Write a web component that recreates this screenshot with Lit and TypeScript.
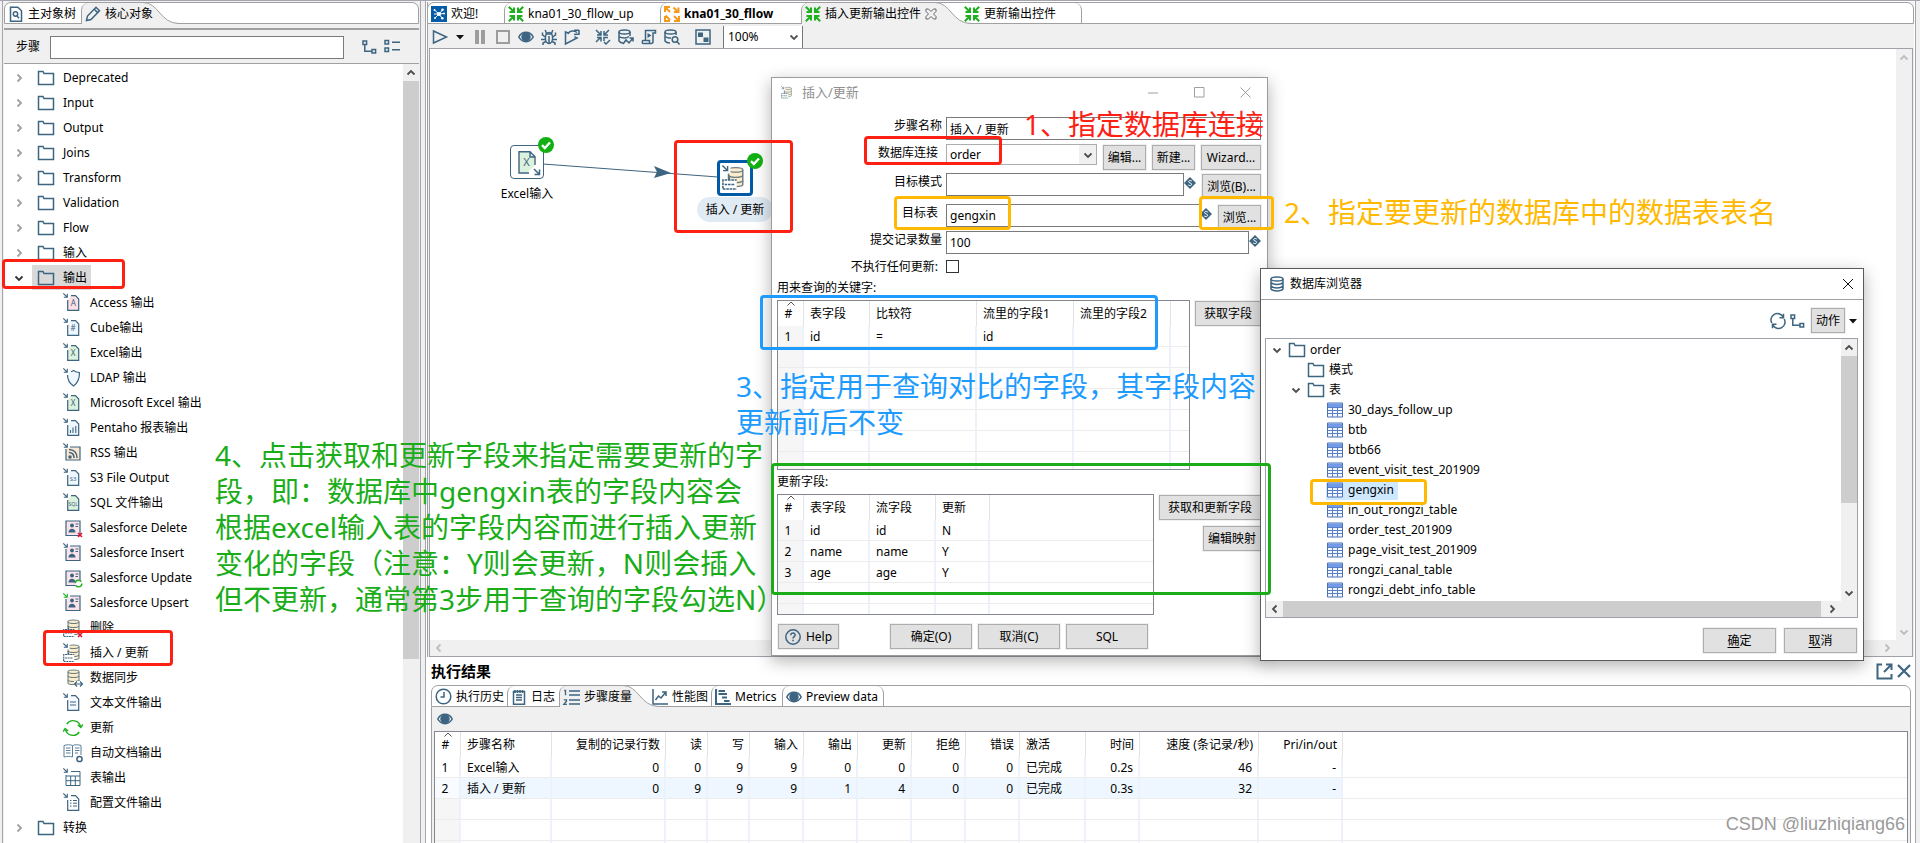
import { LitElement, html, svg, css, nothing, type TemplateResult } from "lit";
import { customElement } from "lit/decorators.js";
import { classMap } from "lit/directives/class-map.js";
import { styleMap } from "lit/directives/style-map.js";

type Glyph = TemplateResult;

const INK = "#3d6480";
const GREEN = "#1fb01f";
const RED = "#e3122b";

const icon = (size: number, body: unknown, box = size) => html`
  <svg class="icon" width=${size} height=${size} viewBox="0 0 ${box} ${box}" fill="none"
    stroke=${INK} stroke-width="1.5" aria-hidden="true">${body}</svg>`;

/* ---------- toolbar and tab glyphs ---------- */
const folder = () => icon(18, svg`<path d="M1.5 3v12.5h15V4.5H7L6 2.5H1.5z"/>`);
const docSearch = () => icon(16, svg`<path d="M2.5 1.2h7.3l3.7 3.6v10.5h-11z"/><circle cx="7.5" cy="8" r="2.2"/><path d="M9 10l2 2.2"/>`);
const pencil = () => icon(16, svg`<path d="M1.5 14.5l1-4.5L11 1.3l3.5 3.4L6 13.5zM9.3 3.3l3.3 3.3"/>`);
const treeGlyph = () => icon(16, svg`<path d="M2 2h3.6v3.6H2zM11 10.4h3.6V14H11zM3.8 6v6.2H11"/>`);
const listGlyph = () => icon(18, svg`<path d="M2 2.5h3.5V6H2zM2 10h3.5v3.5H2zM9 4.3h8M9 11.8h8"/>`);
const run = () => icon(16, svg`<path d="M1.5 2l13 6-13 6z"/>`);
const caret = () => icon(10, svg`<path d="M1 3h8L5 7.5z" fill="#111" stroke="none"/>`);
const pause = () => icon(16, svg`<path d="M3 1h4v14H3zM9 1h4v14H9z" fill="#9d9d9d" stroke="none"/>`);
const stop = () => icon(16, svg`<path d="M2 2h12v12H2z" stroke="#9d9d9d" stroke-width="2"/>`);
const eye = () => icon(16, svg`<path d="M.8 8C4 1.8 12 1.8 15.2 8 12 14.2 4 14.2.8 8z"/><circle cx="8" cy="8" r="4" fill=${INK}/>`);
const bug = () => icon(16, svg`<ellipse cx="8" cy="9" rx="3.6" ry="5.4"/><path d="M4.6 5h6.8M5.5 4.500L4.200 1M10.500 4.500L11.800 1M4.500 8L1.500 6V3.500M4.400 10.500H0M4.800 12.500L2 14v2M11.500 8l3-2V3.500M11.600 10.500H16M11.200 12.500L14 14v2M8 7v7"/>`);
const replay = () => icon(16, svg`<path d="M5 4.500L1.500 3v12L13 9l-2.500-1.200M4 5c1.500-3.500 6-4 9-1.500M10 1.200h5M15 1v5M15 5l-5 .5"/>`);
const verify = () => icon(16, svg`<path d="M1 1l5 5M6 2v4H2M14 1L9 6M9 2v4h4M1 13l5-5M2 8.500h4v4M9 12V8.500h4M9 13l2 2 4-4"/>`);
const dbImpact = () => icon(16, svg`<path d="M1 3v9c1 1.5 3 2 4 2M1 7.5c3 2 8 2 10 0M12 3v4"/><ellipse cx="6.5" cy="3" rx="5.5" ry="2"/><path d="M5 15l3-4 3 3 4-5M11.500 9H15v3.500"/>`);
const script = () => icon(16, svg`<path d="M4.5 11V1.5h10V4H12v8.5c0 1.5-1 2-2 2H2c-1 0-1-3 0-3h6.5V14"/><path d="M6.5 4l4 2.5-4 2.5z" fill=${INK} stroke="none"/>`);
const dbExplore = () => icon(16, svg`<path d="M1 3v9c1 1.5 3 2 5 2M1 7.5c2 1.5 4 1.8 6 1.5M12 3v3"/><ellipse cx="6.5" cy="3" rx="5.5" ry="2"/><circle cx="11" cy="10.5" r="2.8"/><path d="M13 12.5l2.5 3"/>`);
const gridGlyph = () => icon(16, svg`<path d="M1 1h14v14H1z"/><path d="M3 3.5h5V8H3zM8.5 8.5h5V13h-5z" fill=${INK} stroke="none"/>`);
const arrowsIn = () => icon(16, svg`<g stroke=${GREEN} stroke-width="2"><path d="M.8.8l5 5M6 1.500V6H1.500M15.200.8l-5 5M10 1.500V6h4.500M.8 15.200l5-5M6 14.500V10H1.500M15.200 15.200l-5-5M10 14.500V10h4.500"/></g>`);
const arrowsOut = () => icon(16, svg`<g stroke="#f79a1c" stroke-width="2"><path d="M6 6L1.500 1.500M1 6V1h5M9.500 1.500L14 6M14.500 1.500V6H10M1 10v5h5M1.500 9.500L6 14M10 10l4.500 4.500M15 10v5h-5"/></g>`);
const welcome = () => icon(16, svg`<path d="M0 0h16v16H0z" fill="#045ba6" stroke="none"/><g stroke="#fff" stroke-width="1"><path d="M8 8L3.500 4M8 8l3.500-4M8 8H3M8 8l5-.5M8 8l3 4M8 8l-4 4"/></g><g fill="#fff" stroke="none"><circle cx="8" cy="8" r="2"/><circle cx="3.5" cy="4" r="1"/><circle cx="11.5" cy="3.8" r="1.3"/><circle cx="13" cy="7.5" r="1"/><circle cx="11.3" cy="12.3" r="1.3"/><circle cx="4" cy="12" r="1"/></g>`);
const clock = () => icon(17, svg`<circle cx="8.5" cy="8.5" r="7.3"/><path d="M9 4v5H5.5"/>`);
const notepad = () => icon(16, svg`<path d="M2.5 2.5h11v12.7h-11zM5 6h6M5 8.5h6M5 11h6M4 1v3M6.5 1v3M9 1v3M11.5 1v3"/>`);
const numbered = () => icon(17, svg`<path d="M6 2h11M6 6h11M6 11h11M6 15h11M1.200 1.500h1.300v4.800M.8 10.800h2.700v1.500L.9 15.300h3" stroke-width="1.3"/>`);
const chartUp = () => icon(16, svg`<path d="M1 0v15h15M3.500 11l3-4 2.500 2 4.500-5.500M10 3h4v4"/>`);
const gantt = () => icon(16, svg`<path d="M1 0v15h15M3.500 2H10M3.500 5h3M5.500 5H12M7 8.500h5M9 12h5.500" stroke-width="2"/>`);
const popOut = () => icon(17, svg`<path d="M6 1.500H1.500v14h14V11M8 9l7-7M10 1.500h5.500V7" stroke-width="2"/>`);
const cross = () => icon(14, svg`<path d="M1 1l12 12M13 1L1 13" stroke-width="2.2"/>`);
const dbGlyph = () => icon(16, svg`<ellipse cx="8" cy="3" rx="6" ry="2"/><path d="M2 3v10c2 2.500 10 2.500 12 0V3M2 6.500c2 2.500 10 2.500 12 0M2 10c2 2.500 10 2.500 12 0"/>`);
const refresh = () => icon(16, svg`<path d="M1.800 10A6.400 6.400 0 0 1 13 3.800M14.200 6A6.400 6.400 0 0 1 3 12.200M13.500.8v4h-4M2.500 15.200v-4h4"/>`);
const greenCycle = () => icon(20, svg`<g stroke=${GREEN} stroke-width="1.4"><path d="M3.800 6A7.600 7.600 0 0 1 17.600 9M16.200 14A7.600 7.600 0 0 1 2.400 11M14.800 7l3 2.500L19.800 6.500M.2 13.500l2-3 3 2.500"/></g>`);
const tableGlyph = () => icon(16, svg`<path d="M.5 1h15v14H.5z" fill="#f4f8ff" stroke="#4d6fb4" stroke-width="1"/><path d="M1 1.500h14V5H1z" fill="#6f9be8" stroke="none"/><path d="M1 5.500h14M1 8.500h14M1 11.500h14M5.500 5v10M10.500 5v10" stroke="#5a7fc6" stroke-width="1"/>`);
const variable = () => icon(12, svg`<path d="M6 0l6 6-6 6-6-6z" fill=${INK} stroke="none"/><path d="M7.800 4C6.500 3 4.500 3.500 4.600 4.700c.2 1.500 3 1 3 2.600C7.500 8.600 5.500 9 4.200 8" stroke="#fff" stroke-width="1"/>`);
const help = () => icon(16, svg`<circle cx="8" cy="8" r="7.2"/><path d="M5.800 6.300c0-3 4.500-2.800 4.300-.2C10 7.500 8 7.800 8 9.500M8 10.800v1.500"/>`);
const chevron = (dir: "up" | "down" | "left" | "right", color = "#4d4d4d") => {
  const d = { up: "M1.5 6.5L5 3l3.5 3.5", down: "M1.5 3.5L5 7l3.5-3.5", left: "M6.5 1.5L3 5l3.5 3.5", right: "M3.5 1.5L7 5 3.5 8.5" }[dir];
  return icon(10, svg`<path d=${d} stroke=${color} stroke-width="1.8"/>`);
};

/* ---------- step glyphs ---------- */
const inArrow = (c = INK) => svg`<path d="M.3.3L4 4M4.300.800v3.500H.8" stroke=${c} stroke-width="1.1"/>`;
const page = (fill: string, mark: unknown) => icon(20, svg`${inArrow()}<path d="M4.7 7v10.4h11V6L12.5 2.7H8z" fill=${fill} stroke="none"/><path d="M4.7 7v10.4h11V6L12.5 2.7H8" stroke-width="1.2"/>${mark}`);
const mark = (t: string, size: number) => svg`<text class="mark" x="10.2" y="13" font-size=${size} text-anchor="middle" fill=${INK} stroke="none">${t}</text>`;
const card = (top: unknown, extra: unknown = nothing, whole = false) => icon(20, svg`${top}<path d=${whole ? "M3 3v14.5h14V3z" : "M3 6v11.5h14V3H7"} fill="#fbe3ea" stroke-width="1.2"/><circle cx="9" cy="7.5" r="2" fill=${INK} stroke="none"/><path d="M5.5 14.5c0-5 7-5 7 0z" fill=${INK} stroke="none"/><path d="M12.5 6h3M12.5 8.5h2.5" stroke-width="1"/>${extra}`);
const drum = () => svg`<path d="M5 3.5c0-2 11-2 11 0V15c0 2-11 2-11 0z" fill="#fdeccb" stroke="#6c7f85" stroke-width="1.1"/><path d="M5 4c1 2 10 2 11 0M5 8c1 2 10 2 11 0M5 12c1 2 10 2 11 0" stroke="#6c7f85" stroke-width="1.1"/>`;
const ledger = () => svg`<path d="M.7 11.500h10.600v7H.7z" fill="#fff" stroke="none"/><path d="M.7 18V11.500h10.600M.7 18.500h10.600M2 15h8M5.500 11.500V8" stroke-width="1.2" stroke-dasharray="2 .6"/>`;
const redX = svg`<path d="M15 15l4 4M19 15l-4 4" stroke=${RED}/>`;
const insertUpdate = (size = 20) => icon(size, svg`${drum()}<path d="M0 0h6.500v6.500H0z" fill="#fff" stroke="none"/>${inArrow()}${ledger()}`, 20);

const stepGlyph: Record<string, () => Glyph> = {
  access: () => page("#fbe0e6", mark("A", 8)),
  cube: () => page("#edf7fd", mark("#", 8)),
  excel: () => page("#dcf2dc", mark("X", 8)),
  ldap: () => icon(20, svg`${inArrow()}<path d="M10.500 2.500c2 1.500 4 2 6 2C16.500 11 15 15 10.500 18 6 15 4.500 12 4.500 7M8 3.800l2.500-1.300" fill="#edf7fd" stroke-width="1.2"/>`),
  chart: () => page("#edf7fd", svg`<path d="M7.500 15v-3M10 15V9.500M12.800 15V8" stroke-width="1.1"/>`),
  rss: () => icon(20, svg`${inArrow()}<path d="M3 6v11h14V4H7" fill="#fde6cf" stroke-width="1.2"/><path d="M6 9.500c3 0 5 2 5 5.500M6 6.500c5 0 8 3.500 8 8.500"/><circle cx="7" cy="14" r="1" fill=${INK}/>`),
  s3: () => page("#edf7fd", mark("S3", 6)),
  sql: () => page("#dcf2dc", mark("SQL", 5)),
  sfDelete: () => card(nothing, redX, true),
  sfInsert: () => card(inArrow()),
  sfUpdate: () => card(nothing, svg`<circle cx="15.5" cy="15.5" r="3.3" fill="#fff" stroke=${GREEN} stroke-dasharray="8 2.3"/>`, true),
  sfUpsert: () => card(inArrow(GREEN)),
  delete: () => icon(20, svg`${drum()}${ledger()}${redX}`),
  insertUpdate: () => insertUpdate(),
  sync: () => icon(20, svg`${drum()}<path d="M11 13h9v6h-9z" fill="#fff" stroke="none"/><path d="M12 16h7.500M14 13.500L11.500 16l2.500 2.500M17 13.500l2.500 2.500-2.500 2.500" stroke-width="1.2"/>`),
  text: () => page("#f4faff", svg`<path d="M7 9h6M7 12h6" stroke-width="1"/>`),
  update: () => greenCycle(),
  autodoc: () => icon(20, svg`<path d="M1 2.500c3-1 6-1 8.500 0 2.500-1 5.500-1 8.500 0V12M1 2.500V14c3-.8 6-.8 8.500 0M9.500 2.500V14M3 5h4.500M3 7.500h4.500M3 10h4.500M12 5h4.500M12 7.500h4.500M12 10h3" stroke-width="1" stroke="#5c7f98"/><circle cx="16.5" cy="16" r="2.6" fill="#fff"/>`),
  table: () => icon(20, svg`${inArrow()}<path d="M3 7v10.500h14V3.500H8M3 8h14M3 12.700h14M7.700 8v9.500M12.300 8v9.500" stroke-width="1"/>`),
  props: () => page("#fff", svg`<path d="M7 7.500h1.500M10 7.500h4M7 10.200h1.500M10 10.200h4M7 13h1.500M10 13h4" stroke-width="1"/>`),
};

/* ---------- data ---------- */
interface Tab { label: string; glyph: () => Glyph; width: number; active?: boolean; bold?: boolean; closable?: boolean; }

const sideTabs: Tab[] = [
  { label: "主对象树", glyph: docSearch, width: 76 },
  { label: "核心对象", glyph: pencil, width: 62, active: true },
];
const editorTabs: Tab[] = [
  { label: "欢迎!", glyph: welcome, width: 76 },
  { label: "kna01_30_fllow_up", glyph: arrowsIn, width: 156 },
  { label: "kna01_30_fllow", glyph: arrowsOut, width: 141, bold: true },
  { label: "插入更新输出控件", glyph: arrowsIn, width: 134, active: true, closable: true },
  { label: "更新输出控件", glyph: arrowsIn, width: 121 },
];
const resultTabs: Tab[] = [
  { label: "执行历史", glyph: clock, width: 75 },
  { label: "日志", glyph: notepad, width: 52 },
  { label: "步骤度量", glyph: numbered, width: 64, active: true },
  { label: "性能图", glyph: chartUp, width: 62 },
  { label: "Metrics", glyph: gantt, width: 71 },
  { label: "Preview data", glyph: eye, width: 102 },
];

const foldersBefore = ["Deprecated", "Input", "Output", "Joins", "Transform", "Validation", "Flow", "输入"];
const steps: [string, string][] = [
  ["access", "Access 输出"], ["cube", "Cube输出"], ["excel", "Excel输出"], ["ldap", "LDAP 输出"],
  ["excel", "Microsoft Excel 输出"], ["chart", "Pentaho 报表输出"], ["rss", "RSS 输出"], ["s3", "S3 File Output"],
  ["sql", "SQL 文件输出"], ["sfDelete", "Salesforce Delete"], ["sfInsert", "Salesforce Insert"],
  ["sfUpdate", "Salesforce Update"], ["sfUpsert", "Salesforce Upsert"], ["delete", "删除"],
  ["insertUpdate", "插入 / 更新"], ["sync", "数据同步"], ["text", "文本文件输出"], ["update", "更新"],
  ["autodoc", "自动文档输出"], ["table", "表输出"], ["props", "配置文件输出"],
];

interface Column { name: string; width?: number; right?: boolean; }
const keyColumns: Column[] = [
  { name: "#", width: 26 }, { name: "表字段", width: 66 }, { name: "比较符", width: 107 },
  { name: "流里的字段1", width: 97 }, { name: "流里的字段2", width: 97 }, { name: "" },
];
const updateColumns: Column[] = [
  { name: "#", width: 26 }, { name: "表字段", width: 66 }, { name: "流字段", width: 66 }, { name: "更新", width: 54 }, { name: "" },
];
const metricColumns: Column[] = [
  { name: "#", width: 26 }, { name: "步骤名称", width: 91 }, { name: "复制的记录行数", width: 114, right: true },
  { name: "读", width: 42, right: true }, { name: "写", width: 42, right: true }, { name: "输入", width: 54, right: true },
  { name: "输出", width: 54, right: true }, { name: "更新", width: 54, right: true }, { name: "拒绝", width: 54, right: true },
  { name: "错误", width: 54, right: true }, { name: "激活", width: 66 }, { name: "时间", width: 54, right: true },
  { name: "速度 (条记录/秒)", width: 119, right: true }, { name: "Pri/in/out", width: 84, right: true }, { name: "" },
];
const metricRows = [
  ["1", "Excel输入", "0", "0", "9", "9", "0", "0", "0", "0", "已完成", "0.2s", "46", "-"],
  ["2", "插入 / 更新", "0", "9", "9", "9", "1", "4", "0", "0", "已完成", "0.3s", "32", "-"],
];

const dbTables = ["30_days_follow_up", "btb", "btb66", "event_visit_test_201909", "gengxin", "in_out_rongzi_table",
  "order_test_201909", "page_visit_test_201909", "rongzi_canal_table", "rongzi_debt_info_table"];

const frames = [
  { tone: "red", x: 2, y: 259, w: 123, h: 30 },
  { tone: "red", x: 43, y: 630, w: 130, h: 36 },
  { tone: "red", x: 674, y: 140, w: 119, h: 93 },
  { tone: "red", x: 864, y: 136, w: 138, h: 29 },
  { tone: "amber", x: 894, y: 196, w: 117, h: 34 },
  { tone: "amber", x: 1199, y: 196, w: 75, h: 34 },
  { tone: "amber", x: 1310, y: 479, w: 117, h: 26 },
  { tone: "blue", x: 760, y: 295, w: 398, h: 55 },
  { tone: "green", x: 771, y: 463, w: 500, h: 132 },
];
const notes = [
  { tone: "red", x: 1024, y: 106, lines: ["1、指定数据库连接"] },
  { tone: "amber", x: 1284, y: 194, lines: ["2、指定要更新的数据库中的数据表表名"] },
  { tone: "blue", x: 736, y: 368, lines: ["3、指定用于查询对比的字段，其字段内容", "更新前后不变"] },
  { tone: "green", x: 215, y: 437, lines: ["4、点击获取和更新字段来指定需要更新的字", "段，即：数据库中gengxin表的字段内容会",
    "根据excel输入表的字段内容而进行插入更新", "变化的字段（注意：Y则会更新，N则会插入", "但不更新，通常第3步用于查询的字段勾选N）"] },
];

const nodes = [
  { label: "Excel输入", x: 52, y: 96, selected: false },
  { label: "插入 / 更新", x: 260, y: 111, selected: true },
];

@customElement("app-root")
export class AppRoot extends LitElement {
  static styles = css`
    :host { display: block; height: 100vh; color: #000; font: 12px/16px "Noto Sans", "Noto Sans CJK SC", sans-serif; }
    * { box-sizing: border-box; }
    button, input, select { font: inherit; color: inherit; margin: 0; border-radius: 0; }
    button { padding: 0; border: 0; background: none; white-space: nowrap; }
    ul { list-style: none; margin: 0; padding: 0; }
    .icon { display: block; flex: none; overflow: visible; }
    .mark { font-family: "Noto Sans", sans-serif; }

    .shell { position: relative; height: 100%; overflow: hidden; display: grid; grid-template-columns: 421px minmax(0, 1fr); background: #f0f0f0; border-top: 1px solid #a5a5ad; }

    /* tab strips */
    .tabs { display: flex; height: 22px; flex: none; background: #fff; border: 1px solid #a0a0a0; border-radius: 7px 7px 0 0; }
    .tab { position: relative; display: flex; align-items: center; gap: 4px; height: 20px; padding: 1px 0 0 3px; border-left: 1px solid #a0a0a0; border-top-left-radius: 7px; }
    .tab:first-child, .tab.active + .tab { border-left: 0; }
    .editor .tab:last-child, .results .tab:last-child { border-right: 1px solid #a0a0a0; border-top-right-radius: 7px; }
    .tab.active { height: 21px; background: #f0f0f0; margin-right: 26px; }
    .tab > .icon, .tab > .caption { position: relative; z-index: 1; }
    .tab.bold { font-weight: 700; }
    .swoosh { position: absolute; left: 100%; top: -1px; }

    /* left palette */
    .side { display: flex; flex-direction: column; min-height: 0; margin-left: 2px; padding: 1px 1px 0; border: solid #a5a5ad; border-width: 0 1px; }
    .filter { display: flex; align-items: center; margin-top: 4px; height: 36px; padding: 1px 18px 0 12px; border-top: 2px solid #a0a0a0; border-bottom: 1px solid #a0a0a0; flex: none; }
    .filter input { flex: 1; min-width: 0; height: 23px; margin: 0 17px 0 10px; border: 1px solid #7a7a7a; background: #fff; }
    .filter button + button { margin-left: 6px; }
    .palette { display: flex; flex: 1; min-height: 0; overflow: hidden; background: #fff; }
    .palette > ul { flex: 1; padding-top: 1px; }
    .row { display: flex; align-items: center; height: 25px; }
    .row.group { padding-left: 10px; }
    .row.group .name { display: flex; align-items: center; gap: 8px; height: 25px; margin-left: 8px; padding: 0 4px 0 5px; }
    .row.group.picked .name { background: #d9d9d9; }
    .row.step { gap: 7px; padding-left: 59px; }

    /* scroll bars */
    .bar { display: flex; flex: none; background: #f0f0f0; }
    .bar > span { display: flex; align-items: center; justify-content: center; flex: none; width: 17px; height: 17px; }
    .bar.v { flex-direction: column; width: 16px; }
    .bar.v > span { width: 16px; }
    .bar.h { height: 16px; padding-right: 17px; }
    .bar.h > span { height: 16px; }
    .thumb { background: #cdcdcd; }
    .space { flex: 1; }

    /* main area */
    .main { display: grid; grid-template-rows: minmax(0, 1fr) 186px; min-width: 0; margin: 0 4px; padding: 1px 1px 0; background: #fff; border: solid #a5a5ad; border-width: 0 1px; }
    .editor { display: flex; flex-direction: column; min-height: 0; background: #f0f0f0; border-left: 1px solid #a0a0a0; }
    .editor .tabs { margin-left: -1px; }
    .toolbar { display: flex; align-items: center; gap: 7px; height: 24px; flex: none; padding: 2px 0 0 4px; }
    .toolbar .split { width: 1px; }
    .zoom { position: relative; display: flex; align-items: center; height: 22px; margin-left: 5px; }
    .zoom select { width: 80px; height: 22px; padding: 0 0 0 4px; appearance: none; background: #fff; border: solid #777; border-width: 0 1px; }
    .over { position: absolute; right: 4px; top: 6px; pointer-events: none; }
    .canvasbox { display: flex; flex-direction: column; flex: 1; min-height: 0; margin: 0 1px; border: 1px solid #a0a0a8; }
    .canvasrow { display: flex; flex: 1; min-height: 0; }
    .canvas { flex: 1; position: relative; background: #fff; overflow: hidden; }
    .hop { position: absolute; left: 0; top: 0; }
    .node { position: absolute; display: flex; flex-direction: column; align-items: center; width: 90px; }
    .node .tile { display: flex; align-items: center; justify-content: center; position: relative; width: 34px; height: 34px; background: #fff; border: 1px solid #3d6480; border-radius: 4px; }
    .node.on .tile { width: 36px; height: 36px; border: 3px solid #005aa5; }
    .node .label { margin-top: 7px; }
    .node.on .label { margin-top: 1px; padding: 4px 9px; line-height: 17px; border-radius: 13px; background: #e1ebf4; white-space: nowrap; }
    .badge { position: absolute; right: -11px; top: -9px; }
    .node.on .badge { right: -13px; top: -10px; }

    /* results */
    .results { display: flex; flex-direction: column; min-height: 0; overflow: hidden; padding: 0 3px 0 4px; }
    .results header { display: flex; align-items: center; height: 28px; flex: none; gap: 4px; }
    .results h2 { flex: 1; margin: 0; font-size: 15px; line-height: 20px; font-weight: 700; }
    .sheet { flex: 1; min-height: 0; display: flex; flex-direction: column; padding: 0 2px; background: #f0f0f0; border: solid #a0a0a0; border-width: 0 1px; }
    .sheet .tools { display: flex; align-items: center; height: 24px; padding: 0 0 0 3px; flex: none; }

    /* grids */
    .grid { background: #fff; border: 1px solid #828790; overflow: hidden; }
    .sheet .grid { flex: 1; border-bottom: 0; }
    table { width: 100%; table-layout: fixed; border-collapse: separate; border-spacing: 0; }
    th, td { padding: 0 6px; text-align: left; font-weight: 400; white-space: nowrap; overflow: hidden; }
    th { position: relative; height: 25px; border-right: 1px solid #e3e3e3; }
    td { height: 21px; padding-top: 2px; border-right: 2px solid #edf2fa; border-bottom: 1px solid #ececec; }
    th:last-child, td:last-child { border-right: 0; }
    th:first-child, td:first-child { text-align: center; padding-left: 0; padding-right: 4px; }
    td:first-child { background: #f6f6f6; }
    th.right, td.right { text-align: right; padding-right: 5px; }
    .live td { background: #fff; }
    .live.alt td { background: #eef7ff; }
    .live.alt td:first-child { background: #f8fbff; }
    .live td:last-child { background: #fff; }
    .sorter { position: absolute; left: 9px; top: 0; }

    /* dialogs */
    .dialog { position: absolute; display: flex; flex-direction: column; background: #fff; border: 1px solid #9b9b9b; box-shadow: 0 5px 16px rgba(0, 0, 0, .3); }
    .push { flex: none; display: flex; align-items: center; justify-content: center; gap: 5px; height: 25px; background: #e1e1e1; border: 1px solid #adadad; box-shadow: 0 0 0 1px #f0f0f0; }
    .push u { text-underline-offset: 2px; }
    .edit { left: 771px; top: 76px; width: 497px; height: 579px; }
    .edit .title { display: flex; align-items: center; height: 28px; padding: 0 13px 0 9px; gap: 8px; color: #8f8f8f; margin-bottom: 11px; }
    .edit .title h3 { flex: 1; margin: 0; font-size: 13px; font-weight: 400; }
    .edit .title button { display: block; width: 14px; margin-left: 24px; }
    .edit .title .icon { opacity: .8; }
    .form { display: grid; grid-template-rows: 27px 29px 31px 27px 27px 21px; padding-right: 6px; }
    .field { display: grid; grid-template-columns: 170px minmax(0, 1fr); column-gap: 4px; align-items: start; }
    .field label { text-align: right; line-height: 18px; }
    .field label.tight { padding-right: 4px; }
    .controls { display: flex; align-items: flex-start; }
    .controls input[type="text"] { flex: 1; min-width: 0; height: 23px; padding: 0 3px; border: 1px solid #7a7a7a; background: #fff; }
    .controls .icon { margin-top: 4px; }
    .controls .push { margin-top: 1px; margin-left: 6px; width: 43px; }
    .controls .push.wide { width: 60px; }
    .controls .push.far { width: 59px; }
    .controls input[type="checkbox"] { appearance: none; width: 13px; height: 13px; margin-top: 2px; border: 1px solid #333; background: #fff; }
    .combo { position: relative; flex: 1; }
    .combo select { display: block; width: 100%; height: 21px; appearance: none; padding: 0 3px; border: 1px solid #adadad; background: #fff; }
    .drop { position: absolute; right: 1px; top: 1px; display: flex; align-items: center; justify-content: center; width: 17px; height: 19px; background: #f0f0f0; pointer-events: none; }
    .combo .icon { margin: 0; }
    .block { padding: 0 6px 0 5px; }
    .block p { margin: 0; height: 21px; line-height: 18px; }
    .block.second p { height: 24px; line-height: 23px; }
    .pair { display: flex; gap: 5px; }
    .pair .grid { flex: 1; height: 170px; }
    .block.second .grid { height: 121px; }
    .side-buttons { display: flex; flex-direction: column; align-items: flex-end; gap: 6px; padding-top: 1px; }
    .side-buttons .push { width: 66px; }
    .side-buttons .push.long { width: 102px; }
    .side-buttons .push.mid { width: 58px; }
    .foot { display: flex; gap: 6px; margin-top: 9px; padding-left: 6px; }
    .foot .push { width: 82px; }
    .foot .push.help { width: 61px; margin-right: 45px; }

    .browser { left: 1260px; top: 267px; width: 604px; height: 393px; border-color: #5b5b5b; }
    .browser .title { display: flex; align-items: center; height: 31px; flex: none; gap: 5px; padding: 0 9px 0 8px; border-bottom: 1px solid #a0a0a0; }
    .browser .title h3 { flex: 1; margin: 0; font-size: 12px; font-weight: 400; }
    .browser .acts { display: flex; align-items: center; justify-content: flex-end; height: 38px; padding: 3px 5px 0 0; gap: 3px; flex: none; }
    .browser .acts .push { width: 34px; margin: 0 0 0 3px; }
    .treebox { display: flex; flex-direction: column; flex: 1; min-height: 0; margin: 0 5px 0 4px; border: 1px solid #a0a0a8; }
    .treebox .upper { display: flex; flex: 1; min-height: 0; overflow: hidden; }
    .treebox ul { flex: 1; padding-top: 1px; }
    .treebox li { display: flex; align-items: center; height: 20px; padding-left: 6px; gap: 5px; }
    .treebox li.deep { padding-left: 25px; }
    .treebox li.leafdir { padding-left: 40px; }
    .treebox li.leaf { padding-left: 60px; }
    .treebox li .name { display: flex; align-items: center; gap: 4px; height: 20px; padding: 0 4px 0 1px; }
    .treebox li.leaf .name { gap: 5px; }
    .treebox li.picked .name { background: #cde8ff; }
    .browser .foot { justify-content: flex-end; gap: 8px; margin: 10px 6px 7px; flex: none; }
    .browser .foot .push { width: 73px; }

    /* notes laid over the workspace */
    .frame, .note, .stamp { position: absolute; pointer-events: none; }
    .frame { border: 3px solid currentColor; border-radius: 4px; }
    .note { font-size: 28px; line-height: 36px; white-space: nowrap; }
    .red { color: #ff2014; }
    .amber { color: #ffb900; }
    .blue { color: #1e9bff; }
    .green { color: #1aad19; }
    .stamp { right: 15px; bottom: 7px; font: 18px/24px "Liberation Sans", sans-serif; color: #9a9a9a; text-shadow: 0 0 2px #fff; }
  `;

  private tabs(items: Tab[], label: string) {
    return html`<div class="tabs" role="tablist" aria-label=${label}>
      ${items.map((t) => html`
        <button class=${classMap({ tab: true, active: !!t.active, bold: !!t.bold })} role="tab"
          aria-selected=${t.active ? "true" : "false"} style=${styleMap({ width: `${t.width}px` })}>
          ${t.active ? html`<svg class="swoosh" width="36" height="22" viewBox="0 0 36 22" aria-hidden="true">
            <path d="M0 .5C16 .5 17 21.5 36 21.5V22H0z" fill="#f0f0f0"/>
            <path d="M0 .5C16 .5 17 21.5 36 21.5" fill="none" stroke="#a0a0a0"/></svg>` : nothing}
          ${t.glyph()}<span class="caption">${t.label}</span>
          ${t.closable ? icon(12, svg`<path d="M1 1h2.500L6 3.500 8.500 1H11v2.500L8.500 6 11 8.500V11H8.500L6 8.500 3.500 11H1V8.500L3.500 6 1 3.500z" stroke="#666" stroke-width="1"/>`) : nothing}
        </button>`)}
    </div>`;
  }

  private bar(dir: "v" | "h", opts: { thumb?: number; faint?: boolean; end?: boolean } = {}) {
    const tone = opts.faint ? "#bdbdbd" : "#4d4d4d";
    const dim = `${opts.thumb ?? 0}px`;
    return html`<div class="bar ${dir}" aria-hidden="true">
      <span>${chevron(dir === "v" ? "up" : "left", tone)}</span>
      <div class="thumb" style=${styleMap(dir === "v" ? { height: dim } : { width: dim })}></div>
      <div class="space"></div>
      ${opts.end === false ? nothing : html`<span>${chevron(dir === "v" ? "down" : "right", tone)}</span>`}
    </div>`;
  }

  private grid(label: string, columns: Column[], rows: string[][], blanks: number, live = false) {
    const all = [...rows, ...Array.from({ length: blanks }, () => [] as string[])];
    return html`<div class="grid"><table aria-label=${label}>
      <colgroup>${columns.map((c) => html`<col style=${styleMap(c.width ? { width: `${c.width}px` } : {})}>`)}</colgroup>
      <thead><tr>${columns.map((c, i) => html`<th class=${classMap({ right: !!c.right })}>
        ${i === 0 ? html`<svg class="sorter" width="8" height="5" viewBox="0 0 8 5" aria-hidden="true"><path d="M.5 4.5L4 1l3.5 3.5" fill="none" stroke="#555"/></svg>` : nothing}${c.name}</th>`)}</tr></thead>
      <tbody>${all.map((r, n) => html`<tr class=${classMap({ live: live && n < rows.length, alt: n % 2 === 1 })}>
        ${columns.map((c, i) => html`<td class=${classMap({ right: !!c.right })}>${r[i] ?? ""}</td>`)}</tr>`)}</tbody>
    </table></div>`;
  }

  private group(name: string, open = false) {
    return html`<li class=${classMap({ row: true, group: true, picked: open })}>
      ${open ? chevron("down", "#333") : chevron("right", "#a0a0a0")}
      <span class="name">${folder()}${name}</span></li>`;
  }

  private badge() {
    return html`<svg class="badge" width="16" height="16" viewBox="0 0 16 16" aria-hidden="true">
      <circle cx="8" cy="8" r="8" fill="#12b012"/><path d="M4 8.2l2.8 2.8L12 5.5" fill="none" stroke="#fff" stroke-width="2.4"/></svg>`;
  }

  private renderSide() {
    return html`<aside class="side">
      ${this.tabs(sideTabs, "视图")}
      <div class="filter">
        <label for="filter">步骤</label><input id="filter" type="text">
        <button aria-label="展开">${treeGlyph()}</button><button aria-label="收起">${listGlyph()}</button>
      </div>
      <div class="palette">
        <ul>
          ${foldersBefore.map((f) => this.group(f))}
          ${this.group("输出", true)}
          ${steps.map(([g, name]) => html`<li class="row step">${stepGlyph[g]()}<span>${name}</span></li>`)}
          ${this.group("转换")}
        </ul>
        ${this.bar("v", { thumb: 578, end: false })}
      </div>
    </aside>`;
  }

  private renderEditor() {
    const tool = (name: string, g: () => Glyph) => html`<button aria-label=${name}>${g()}</button>`;
    const excelTile = icon(26, svg`<path d="M5 3h10l5 5v9l-6 6H5z" fill="#dcf2dc" stroke="none"/><path d="M15 24H5V2.700h11l5 5V16M16 3v5h5" stroke-width="1.4"/><path d="M20 20l5 5M25.500 20.500v5h-5"/><text class="mark" x="12.5" y="17" font-size="11" text-anchor="middle" fill="#3d6480" stroke="none">X</text>`);
    return html`<section class="editor">
      ${this.tabs(editorTabs, "转换")}
      <div class="toolbar">
        ${tool("运行", run)}${tool("运行选项", caret)}${tool("暂停", pause)}${tool("停止", stop)}
        ${tool("预览", eye)}${tool("调试", bug)}${tool("重放", replay)}<span class="split"></span>
        ${tool("校验", verify)}${tool("影响", dbImpact)}${tool("脚本", script)}${tool("浏览数据库", dbExplore)}<span class="split"></span>
        ${tool("结果", gridGlyph)}
        <div class="zoom"><select aria-label="缩放"><option>100%</option></select><span class="over">${chevron("down", "#555")}</span></div>
      </div>
      <div class="canvasbox">
        <div class="canvasrow">
          <div class="canvas">
            <svg class="hop" width="340" height="160" viewBox="0 0 340 160" aria-hidden="true">
              <path d="M113 115l175 13" stroke="#3d6480" fill="none"/><path d="M224 117l17 7-17 5 3-6z" fill="#3d6480"/></svg>
            ${nodes.map((n) => html`<div class=${classMap({ node: true, on: n.selected })} style=${styleMap({ left: `${n.x}px`, top: `${n.y}px` })}>
              <div class="tile">${n.selected ? insertUpdate(26) : excelTile}${this.badge()}</div>
              <span class="label">${n.label}</span>
            </div>`)}
          </div>
          ${this.bar("v", { faint: true })}
        </div>
        ${this.bar("h", { faint: true })}
      </div>
    </section>`;
  }

  private renderResults() {
    return html`<section class="results">
      <header><h2>执行结果</h2><button aria-label="最大化">${popOut()}</button><button aria-label="关闭">${cross()}</button></header>
      ${this.tabs(resultTabs, "执行结果")}
      <div class="sheet">
        <div class="tools"><button aria-label="显示">${eye()}</button></div>
        ${this.grid("步骤度量", metricColumns, metricRows, 3, true)}
      </div>
    </section>`;
  }

  private renderEditDialog() {
    return html`<section class="dialog edit" role="dialog" aria-label="插入/更新">
      <div class="title">${insertUpdate(13)}<h3>插入/更新</h3>
        <button aria-label="最小化">${icon(11, svg`<path d="M0 6h10" stroke="#888" stroke-width="1"/>`)}</button>
        <button aria-label="最大化">${icon(11, svg`<path d="M.5.500h9.500v9.500H.5z" stroke="#888" stroke-width="1"/>`)}</button>
        <button aria-label="关闭">${icon(11, svg`<path d="M.5.500l10 10M10.500.500l-10 10" stroke="#888" stroke-width="1"/>`)}</button>
      </div>
      <div class="form">
        <div class="field"><label for="step">步骤名称</label><div class="controls"><input id="step" type="text" .value=${"插入 / 更新"}></div></div>
        <div class="field"><label class="tight" for="conn">数据库连接</label><div class="controls">
          <div class="combo"><select id="conn"><option>order</option></select><span class="drop">${chevron("down")}</span></div>
          <button class="push">编辑...</button><button class="push">新建...</button><button class="push wide">Wizard...</button></div></div>
        <div class="field"><label for="schema">目标模式</label><div class="controls"><input id="schema" type="text">${variable()}<button class="push far">浏览(B)...</button></div></div>
        <div class="field"><label class="tight" for="table">目标表</label><div class="controls"><input id="table" type="text" .value=${"gengxin"}>${variable()}<button class="push">浏览...</button></div></div>
        <div class="field"><label for="commit">提交记录数量</label><div class="controls"><input id="commit" type="text" .value=${"100"}>${variable()}</div></div>
        <div class="field"><label class="tight" for="skip">不执行任何更新:</label><div class="controls"><input id="skip" type="checkbox"></div></div>
      </div>
      <div class="block"><p>用来查询的关键字:</p>
        <div class="pair">${this.grid("用来查询的关键字", keyColumns, [["1", "id", "=", "id"]], 6)}
          <div class="side-buttons"><button class="push">获取字段</button></div></div></div>
      <div class="block second"><p>更新字段:</p>
        <div class="pair">${this.grid("更新字段", updateColumns, [["1", "id", "id", "N"], ["2", "name", "name", "Y"], ["3", "age", "age", "Y"]], 2)}
          <div class="side-buttons"><button class="push long">获取和更新字段</button><button class="push mid">编辑映射</button></div></div></div>
      <div class="foot"><button class="push help">${help()}Help</button><button class="push">确定(O)</button><button class="push">取消(C)</button><button class="push">SQL</button></div>
    </section>`;
  }

  private renderBrowser() {
    return html`<section class="dialog browser" role="dialog" aria-label="数据库浏览器">
      <div class="title">${dbGlyph()}<h3>数据库浏览器</h3>
        <button aria-label="关闭">${icon(12, svg`<path d="M1 1l10 10M11 1L1 11" stroke="#111" stroke-width="1"/>`)}</button></div>
      <div class="acts"><button aria-label="刷新">${refresh()}</button><button aria-label="展开">${treeGlyph()}</button>
        <button class="push">动作</button><button aria-label="更多">${caret()}</button></div>
      <div class="treebox">
        <div class="upper">
          <ul>
            <li>${chevron("down")}<span class="name">${folder()}order</span></li>
            <li class="leafdir"><span class="name">${folder()}模式</span></li>
            <li class="deep">${chevron("down")}<span class="name">${folder()}表</span></li>
            ${dbTables.map((t) => html`<li class=${classMap({ leaf: true, picked: t === "gengxin" })}><span class="name">${tableGlyph()}${t}</span></li>`)}
          </ul>
          ${this.bar("v", { thumb: 147 })}
        </div>
        ${this.bar("h", { thumb: 538 })}
      </div>
      <div class="foot"><button class="push"><span><u>确</u>定</span></button><button class="push"><span><u>取</u>消</span></button></div>
    </section>`;
  }

  render() {
    return html`<div class="shell">
      ${this.renderSide()}
      <main class="main">${this.renderEditor()}${this.renderResults()}</main>
      ${this.renderEditDialog()}
      ${this.renderBrowser()}
      ${frames.map((f) => html`<div class="frame ${f.tone}" style=${styleMap({ left: `${f.x}px`, top: `${f.y - 1}px`, width: `${f.w}px`, height: `${f.h}px` })}></div>`)}
      ${notes.map((n) => html`<div class="note ${n.tone}" style=${styleMap({ left: `${n.x}px`, top: `${n.y - 1}px` })}>${n.lines.map((l) => html`<div>${l}</div>`)}</div>`)}
      <div class="stamp">CSDN @liuzhiqiang66</div>
    </div>`;
  }
}
